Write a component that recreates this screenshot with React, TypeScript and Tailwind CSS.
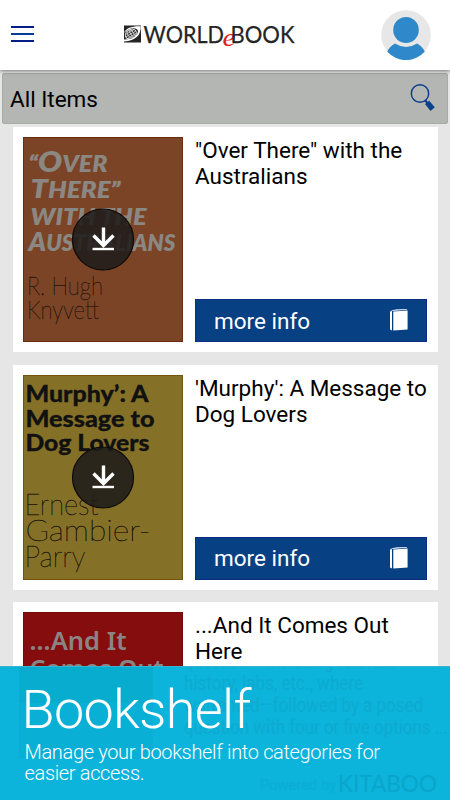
import React from "react";

const lato = "Lato, 'Open Sans', sans-serif";
const sans = "Roboto, 'Open Sans', sans-serif";

type LineProps = {
  x: number;
  y: number;
  w: number;
  size: number;
  weight: number;
  fill: string;
  family?: string;
  italic?: boolean;
  stroke?: number;
  children: React.ReactNode;
};

function Line({ x, y, w, size, weight, fill, family = lato, italic, stroke = 0, children }: LineProps) {
  return (
    <text
      x={x}
      y={y}
      textLength={w}
      lengthAdjust="spacingAndGlyphs"
      fontSize={size}
      fontWeight={weight}
      fontStyle={italic ? "italic" : "normal"}
      fontFamily={family}
      fill={fill}
      stroke={stroke ? fill : "none"}
      strokeWidth={stroke}
    >
      {children}
    </text>
  );
}

function Download() {
  return (
    <g>
      <circle cx="80" cy="102.5" r="30.5" fill="#1e1c1a" fillOpacity="0.87" stroke="#0b0a09" strokeWidth="1.2" />
      <path d="M80.500 90.500v17M70.500 98.500l10 10L90.500 98.500" fill="none" stroke="#fff" strokeWidth="3.400" />
      <path d="M69.500 112h21.500" stroke="#fff" strokeWidth="2.400" />
    </g>
  );
}

function OverThereCover() {
  const c = "#8b8783";
  return (
    <svg viewBox="0 0 160 205" className="h-[205px] w-[160px] shrink-0">
      <rect x="0.500" y="0.500" width="159" height="204" fill="#7b4426" stroke="#6b2c10" />
      <g transform="translate(-22.5 -137.500)">
        <Line x={28} y={172} w={79} size={22} weight={800} fill={c} italic>
          “<tspan fontSize={28}>O</tspan>VER
        </Line>
        <Line x={30} y={198.500} w={90} size={22} weight={800} fill={c} italic>
          <tspan fontSize={26}>T</tspan>HERE”
        </Line>
        <Line x={30} y={225.500} w={116} size={23} weight={800} fill={c} italic>WITH THE</Line>
        <Line x={28} y={251.500} w={147} size={22} weight={800} fill={c} italic>
          <tspan fontSize={26}>A</tspan>USTRALIANS
        </Line>
        <Line x={26.500} y={295.500} w={76} size={26.500} weight={100} stroke={0.350} fill="#1c120c">R. Hugh</Line>
        <Line x={26.500} y={319.500} w={72} size={25.500} weight={100} stroke={0.350} fill="#1c120c">Knyvett</Line>
      </g>
      <Download />
    </svg>
  );
}

function MurphyCover() {
  return (
    <svg viewBox="0 0 160 205" className="h-[205px] w-[160px] shrink-0">
      <rect x="0.500" y="0.500" width="159" height="204" fill="#857027" stroke="#74560a" />
      <g transform="translate(-22.5 -375)">
        <Line x={25} y={401.500} w={123} size={23} weight={900} stroke={0.300} fill="#111">Murphy’: A</Line>
        <Line x={25} y={426.500} w={129} size={23} weight={900} stroke={0.300} fill="#111">Message to</Line>
        <Line x={25} y={450.5} w={124} size={23} weight={900} stroke={0.300} fill="#111">Dog Lovers</Line>
        <Line x={24} y={514.5} w={74} size={29} weight={100} stroke={0.350} fill="#15110a">Ernest</Line>
        <Line x={25} y={541} w={125} size={29} weight={100} stroke={0.350} fill="#15110a">Gambier-</Line>
        <Line x={24} y={567} w={61} size={29} weight={100} stroke={0.350} fill="#15110a">Parry</Line>
      </g>
      <Download />
    </svg>
  );
}

function ComesOutCover() {
  const noto = "'Noto Sans', 'Open Sans', sans-serif";
  return (
    <svg viewBox="0 0 160 205" className="h-[205px] w-[160px] shrink-0">
      <rect x="0.500" y="0.500" width="159" height="204" fill="#860d0e" stroke="#760a0a" />
      <g transform="translate(-22.5 -612.500)">
        <Line x={29} y={650.500} w={97} size={26} weight={600} fill="#8a8585" family={noto}>...And It</Line>
        <Line x={29} y={678.500} w={134} size={26} weight={600} fill="#8a8585" family={noto}>Comes Out</Line>
      </g>
    </svg>
  );
}

function BookIcon() {
  return (
    <svg viewBox="0 0 20 24" className="h-6 w-5">
      <path d="M1 3.500 3 3v19.500L1 21.500z" fill="#fff" />
      <path d="M4.300 3.600 18.600 2.600V21.500L4.300 22.600z" fill="#fff" />
      <path d="M1.500 2.600 8 1.300 18 .9v.8L4 2.900z" fill="#d9e2ee" />
    </svg>
  );
}

function Card({ cover, title }: { cover: React.ReactNode; title: string[] }) {
  return (
    <article className="flex h-[225px] shrink-0 gap-3 bg-white py-[10px] pl-[10px] pr-[10.5px]">
      {cover}
      <div className="flex grow flex-col justify-between pl-[0.5px]">
        <h2 className="whitespace-nowrap text-[22.5px] leading-[26px] text-black">
          {title.map((t) => (
            <span key={t} className="block">{t}</span>
          ))}
        </h2>
        <button className="flex h-[43px] items-center justify-between border border-[#0b2d85] bg-[#074184] pl-[18px] pr-[17px] text-[22.5px] text-white">
          <span className="pt-[2px]">more info</span>
          <span className="pb-[1px]">
            <BookIcon />
          </span>
        </button>
      </div>
    </article>
  );
}

function Logo() {
  return (
    <svg viewBox="0 0 174 26" className="h-[26px] w-[174px] overflow-visible">
      <rect x="1" y="3.500" width="17" height="17" fill="#252525" />
      <path d="M1 11C3 6 9 4 17.800 4.300 18 13 13 18.500 1 19.600V17.500C10 17.500 15 13 15 9 14 4.500 5 6 1 11z" fill="#fff" />
      <ellipse cx="7.800" cy="12" rx="6.300" ry="4.900" transform="rotate(-30 7.800 12)" fill="#fff" />
      <ellipse cx="7.800" cy="12" rx="5.500" ry="4.200" transform="rotate(-30 7.800 12)" fill="#333" />
      <g fill="none" stroke="#e5e5e5" strokeWidth="0.700" transform="rotate(-30 7.800 12)">
        <path d="M2.300 12h11M3 9.800h9.600M3 14.200h9.600M7.800 7.800v8.400" />
        <ellipse cx="7.800" cy="12" rx="3" ry="4.200" />
      </g>
      <Line x={20.500} y={20.500} w={80.500} size={23.500} weight={400} stroke={0.250} fill="#252525">WORLD</Line>
      <Line x={99.500} y={23.500} w={13} size={26} weight={400} fill="#e02020" family="'Liberation Serif', serif" italic>e</Line>
      <Line x={107.500} y={20.500} w={64} size={23.500} weight={400} stroke={0.250} fill="#252525">BOOK</Line>
    </svg>
  );
}

function Avatar() {
  return (
    <svg viewBox="0 0 50 50" className="h-[50px] w-[50px]">
      <circle cx="25" cy="25" r="24.800" fill="#e7e7e7" />
      <ellipse cx="25" cy="20" rx="12.800" ry="13" fill="#2f88c9" />
      <path d="M14 33.500Q25 40.500 36 33.500Q41 36 43.800 41.500A24.800 24.800 0 0 1 6.200 41.500Q9 36 14 33.500z" fill="#2f88c9" />
    </svg>
  );
}

function SearchIcon() {
  return (
    <svg viewBox="0 0 26 30" className="h-[30px] w-[26px]">
      <circle cx="10" cy="10.500" r="8.700" fill="none" stroke="#083b8c" strokeWidth="1.400" />
      <path d="M15.300 17.500l2.200 2.500" stroke="#083b8c" strokeWidth="2" />
      <path d="M15 21l4.200-3.300 5.600 6.600-4.300 3.600z" fill="#084189" />
    </svg>
  );
}

function Banner() {
  return (
    <section className="absolute inset-x-0 top-[666px] h-[134px] border-t border-[#35b6cf] bg-[#0cb3da]">
      <svg viewBox="0 667 450 133" className="absolute left-0 top-0 h-[133px] w-[450px]">
        <rect x="19" y="667" width="134" height="36" fill="#08accf" />
        <rect x="19" y="703" width="134" height="56" fill="#0aafd6" />
        <g opacity="0.550">
          <Line x={184} y={668} w={212} size={20} weight={400} fill="#0da4c9" family={sans}>question – including relevant</Line>
          <Line x={184} y={690} w={179} size={20} weight={400} fill="#0da4c9" family={sans}>history, labs, etc., where</Line>
          <Line x={184} y={712} w={239} size={20} weight={400} fill="#0da4c9" family={sans}>warranted—followed by a posed</Line>
          <Line x={184} y={733.500} w={264} size={20} weight={400} fill="#0da4c9" family={sans}>question with four or five options ...</Line>
        </g>
        <Line x={260} y={790} w={76} size={15} weight={400} fill="#0badd4" family={sans}>Powered by</Line>
        <Line x={338} y={792} w={99} size={23} weight={400} fill="#0aa5cb" family={lato}>KITABOO</Line>
      </svg>
      <div className="relative pl-[21.5px] text-white">
        <h1 className="pt-[12px] text-[54px] font-light leading-[62px] tracking-[-0.65px]">Bookshelf</h1>
        <p className="whitespace-nowrap pl-[3px] pt-[1px] text-[20px] font-light leading-[21px] tracking-[-0.34px]">
          Manage your bookshelf into categories for
          <br />
          easier access.
        </p>
      </div>
    </section>
  );
}

export default function App() {
  return (
    <div className="relative flex h-[800px] w-[450px] flex-col overflow-hidden bg-[#e6e6e6] font-['Roboto','Open_Sans',sans-serif]">
      <header className="z-10 flex h-[70px] shrink-0 items-center bg-white pl-[11px] pr-[19.5px] shadow-[0_1px_4px_rgba(0,0,0,0.5)]">
        <div className="mb-[2px] flex w-[23px] flex-col gap-[5px]">
          <span className="h-[2px] bg-[#051e8a]" />
          <span className="h-[2px] bg-[#083c96]" />
          <span className="h-[2px] bg-[#051e8a]" />
        </div>
        <div className="ml-[89px]">
          <Logo />
        </div>
        <div className="ml-auto">
          <Avatar />
        </div>
      </header>
      <div className="ml-[2px] mr-[2px] mt-[3px] flex h-[51px] shrink-0 items-center justify-between rounded-[2px] border border-[#a9aba8] bg-[#b4b6b3] pl-[7px] pr-[11px]">
        <span className="pt-[2px] text-[22.5px] text-black">All Items</span>
        <div className="pb-[2px]">
          <SearchIcon />
        </div>
      </div>
      <main className="flex flex-col gap-[12.5px] pl-[12.5px] pr-[12.5px] pt-[3.25px]">
        <Card cover={<OverThereCover />} title={['"Over There" with the', "Australians"]} />
        <Card cover={<MurphyCover />} title={["'Murphy': A Message to", "Dog Lovers"]} />
        <Card cover={<ComesOutCover />} title={["...And It Comes Out", "Here"]} />
      </main>
      <Banner />
    </div>
  );
}
